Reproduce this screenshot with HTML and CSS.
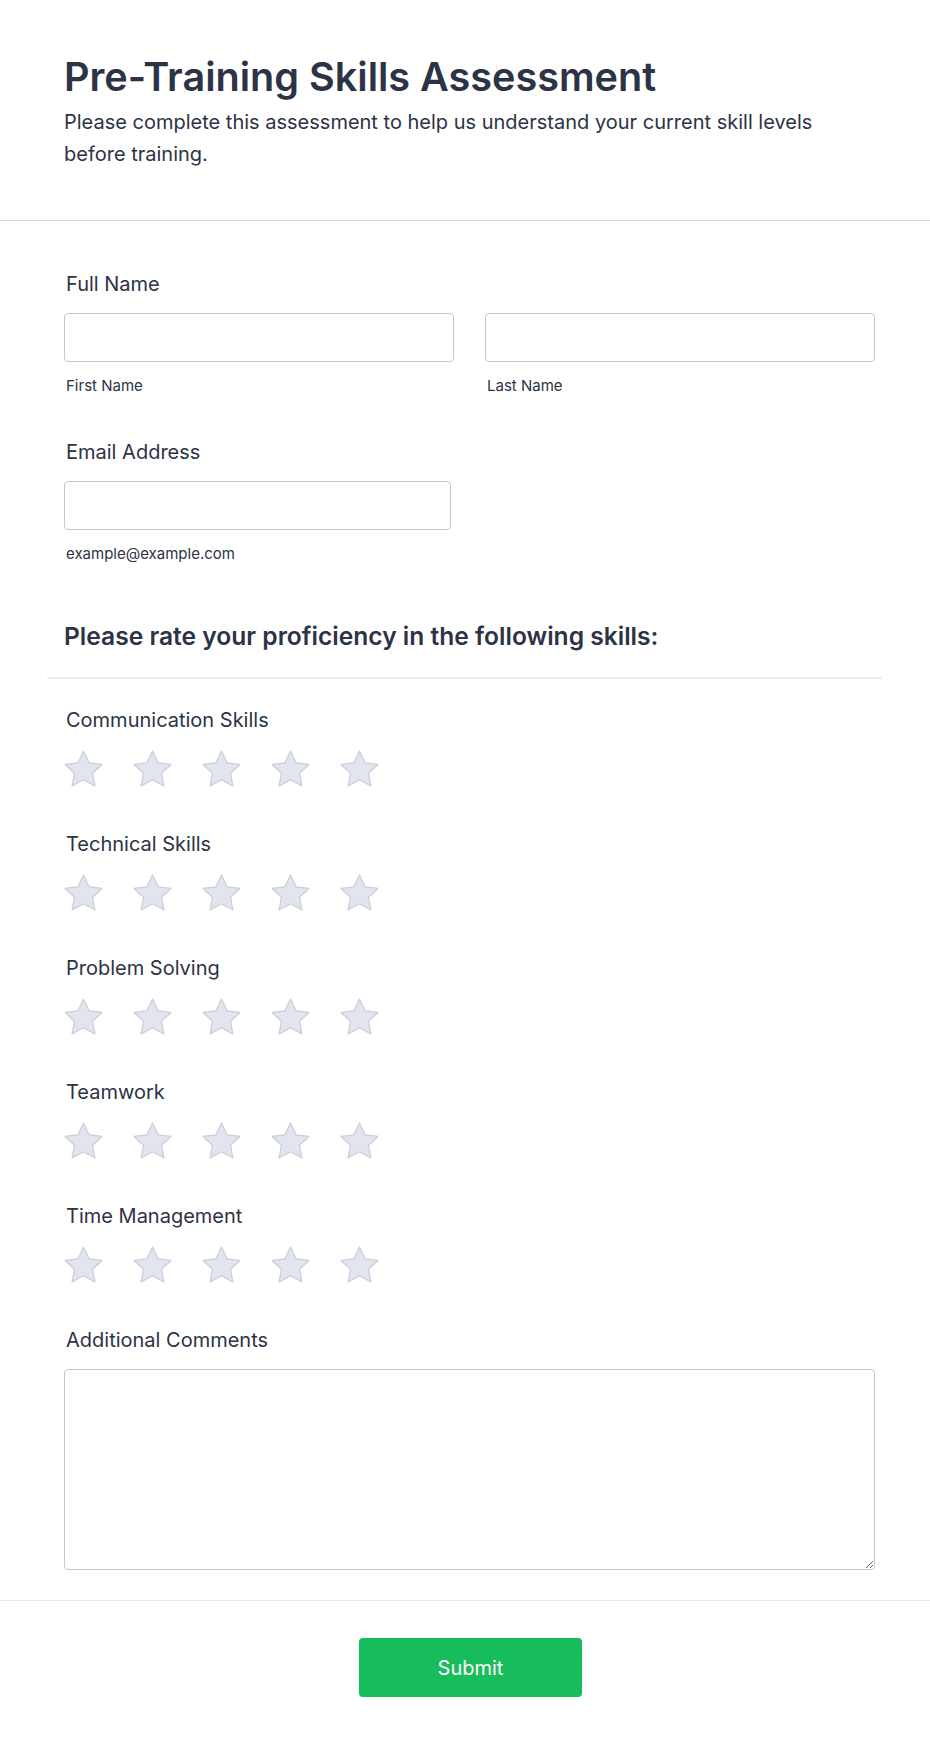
FILE: index.html
```html
<!DOCTYPE html>
<html lang="en">
<head>
<meta charset="utf-8">
<title>Pre-Training Skills Assessment</title>
<link rel="stylesheet" href="styles.css">
</head>
<body>
<header class="form-header">
  <h1 class="form-title">Pre-Training Skills Assessment</h1>
  <p class="form-subtitle">Please complete this assessment to help us understand your current skill levels before training.</p>
</header>

<main class="form-body">
  <div class="field field-name">
    <label class="field-label">Full Name</label>
    <div class="name-row">
      <div class="name-col">
        <input class="text-input" type="text">
        <span class="sub-label">First Name</span>
      </div>
      <div class="name-col">
        <input class="text-input" type="text">
        <span class="sub-label">Last Name</span>
      </div>
    </div>
  </div>

  <div class="field field-email">
    <label class="field-label">Email Address</label>
    <input class="text-input email-input" type="email">
    <span class="sub-label">example@example.com</span>
  </div>

  <div class="section-head">
    <h2 class="section-title">Please rate your proficiency in the following skills:</h2>
  </div>

  <div class="rating">
    <label class="field-label">Communication Skills</label>
    <div class="stars">
      <svg class="star" viewBox="2 2.5 20 19"><polygon points="12 2.5 15 8.9 22 9.8 16.9 14.6 18.2 21.5 12 18.1 5.8 21.5 7.1 14.6 2 9.8 9 8.9"/></svg>
      <svg class="star" viewBox="2 2.5 20 19"><polygon points="12 2.5 15 8.9 22 9.8 16.9 14.6 18.2 21.5 12 18.1 5.8 21.5 7.1 14.6 2 9.8 9 8.9"/></svg>
      <svg class="star" viewBox="2 2.5 20 19"><polygon points="12 2.5 15 8.9 22 9.8 16.9 14.6 18.2 21.5 12 18.1 5.8 21.5 7.1 14.6 2 9.8 9 8.9"/></svg>
      <svg class="star" viewBox="2 2.5 20 19"><polygon points="12 2.5 15 8.9 22 9.8 16.9 14.6 18.2 21.5 12 18.1 5.8 21.5 7.1 14.6 2 9.8 9 8.9"/></svg>
      <svg class="star" viewBox="2 2.5 20 19"><polygon points="12 2.5 15 8.9 22 9.8 16.9 14.6 18.2 21.5 12 18.1 5.8 21.5 7.1 14.6 2 9.8 9 8.9"/></svg>
    </div>
  </div>

  <div class="rating">
    <label class="field-label">Technical Skills</label>
    <div class="stars">
      <svg class="star" viewBox="2 2.5 20 19"><polygon points="12 2.5 15 8.9 22 9.8 16.9 14.6 18.2 21.5 12 18.1 5.8 21.5 7.1 14.6 2 9.8 9 8.9"/></svg>
      <svg class="star" viewBox="2 2.5 20 19"><polygon points="12 2.5 15 8.9 22 9.8 16.9 14.6 18.2 21.5 12 18.1 5.8 21.5 7.1 14.6 2 9.8 9 8.9"/></svg>
      <svg class="star" viewBox="2 2.5 20 19"><polygon points="12 2.5 15 8.9 22 9.8 16.9 14.6 18.2 21.5 12 18.1 5.8 21.5 7.1 14.6 2 9.8 9 8.9"/></svg>
      <svg class="star" viewBox="2 2.5 20 19"><polygon points="12 2.5 15 8.9 22 9.8 16.9 14.6 18.2 21.5 12 18.1 5.8 21.5 7.1 14.6 2 9.8 9 8.9"/></svg>
      <svg class="star" viewBox="2 2.5 20 19"><polygon points="12 2.5 15 8.9 22 9.8 16.9 14.6 18.2 21.5 12 18.1 5.8 21.5 7.1 14.6 2 9.8 9 8.9"/></svg>
    </div>
  </div>

  <div class="rating">
    <label class="field-label">Problem Solving</label>
    <div class="stars">
      <svg class="star" viewBox="2 2.5 20 19"><polygon points="12 2.5 15 8.9 22 9.8 16.9 14.6 18.2 21.5 12 18.1 5.8 21.5 7.1 14.6 2 9.8 9 8.9"/></svg>
      <svg class="star" viewBox="2 2.5 20 19"><polygon points="12 2.5 15 8.9 22 9.8 16.9 14.6 18.2 21.5 12 18.1 5.8 21.5 7.1 14.6 2 9.8 9 8.9"/></svg>
      <svg class="star" viewBox="2 2.5 20 19"><polygon points="12 2.5 15 8.9 22 9.8 16.9 14.6 18.2 21.5 12 18.1 5.8 21.5 7.1 14.6 2 9.8 9 8.9"/></svg>
      <svg class="star" viewBox="2 2.5 20 19"><polygon points="12 2.5 15 8.9 22 9.8 16.9 14.6 18.2 21.5 12 18.1 5.8 21.5 7.1 14.6 2 9.8 9 8.9"/></svg>
      <svg class="star" viewBox="2 2.5 20 19"><polygon points="12 2.5 15 8.9 22 9.8 16.9 14.6 18.2 21.5 12 18.1 5.8 21.5 7.1 14.6 2 9.8 9 8.9"/></svg>
    </div>
  </div>

  <div class="rating">
    <label class="field-label">Teamwork</label>
    <div class="stars">
      <svg class="star" viewBox="2 2.5 20 19"><polygon points="12 2.5 15 8.9 22 9.8 16.9 14.6 18.2 21.5 12 18.1 5.8 21.5 7.1 14.6 2 9.8 9 8.9"/></svg>
      <svg class="star" viewBox="2 2.5 20 19"><polygon points="12 2.5 15 8.9 22 9.8 16.9 14.6 18.2 21.5 12 18.1 5.8 21.5 7.1 14.6 2 9.8 9 8.9"/></svg>
      <svg class="star" viewBox="2 2.5 20 19"><polygon points="12 2.5 15 8.9 22 9.8 16.9 14.6 18.2 21.5 12 18.1 5.8 21.5 7.1 14.6 2 9.8 9 8.9"/></svg>
      <svg class="star" viewBox="2 2.5 20 19"><polygon points="12 2.5 15 8.9 22 9.8 16.9 14.6 18.2 21.5 12 18.1 5.8 21.5 7.1 14.6 2 9.8 9 8.9"/></svg>
      <svg class="star" viewBox="2 2.5 20 19"><polygon points="12 2.5 15 8.9 22 9.8 16.9 14.6 18.2 21.5 12 18.1 5.8 21.5 7.1 14.6 2 9.8 9 8.9"/></svg>
    </div>
  </div>

  <div class="rating">
    <label class="field-label">Time Management</label>
    <div class="stars">
      <svg class="star" viewBox="2 2.5 20 19"><polygon points="12 2.5 15 8.9 22 9.8 16.9 14.6 18.2 21.5 12 18.1 5.8 21.5 7.1 14.6 2 9.8 9 8.9"/></svg>
      <svg class="star" viewBox="2 2.5 20 19"><polygon points="12 2.5 15 8.9 22 9.8 16.9 14.6 18.2 21.5 12 18.1 5.8 21.5 7.1 14.6 2 9.8 9 8.9"/></svg>
      <svg class="star" viewBox="2 2.5 20 19"><polygon points="12 2.5 15 8.9 22 9.8 16.9 14.6 18.2 21.5 12 18.1 5.8 21.5 7.1 14.6 2 9.8 9 8.9"/></svg>
      <svg class="star" viewBox="2 2.5 20 19"><polygon points="12 2.5 15 8.9 22 9.8 16.9 14.6 18.2 21.5 12 18.1 5.8 21.5 7.1 14.6 2 9.8 9 8.9"/></svg>
      <svg class="star" viewBox="2 2.5 20 19"><polygon points="12 2.5 15 8.9 22 9.8 16.9 14.6 18.2 21.5 12 18.1 5.8 21.5 7.1 14.6 2 9.8 9 8.9"/></svg>
    </div>
  </div>

  <div class="field field-comments">
    <label class="field-label">Additional Comments</label>
    <textarea class="text-area"></textarea>
  </div>
</main>

<footer class="form-footer">
  <button class="submit-btn" type="button">Submit</button>
</footer>
</body>
</html>
```

FILE: styles.css
```css
* { box-sizing: border-box; }

html, body {
  margin: 0;
  padding: 0;
  background: #ffffff;
}

body {
  font-family: Inter, "Noto Sans", "Liberation Sans", sans-serif;
  color: #2c3345;
}

.form-header {
  padding: 53px 64px 50px 64px;
  border-bottom: 1px solid #d3d7e3;
}

.form-title {
  margin: 0;
  font-size: 39.6px;
  line-height: 48px;
  font-weight: 600;
  color: #2c3345;
}

.form-subtitle {
  margin: 6px 0 0 0;
  font-size: 20px;
  line-height: 31.5px;
  font-weight: 400;
  color: #2c3345;
}

.form-body {
  padding: 50px 55px 0 64px;
}

.field-label {
  display: block;
  padding-left: 2px;
  font-size: 20px;
  line-height: 27px;
  font-weight: 400;
  color: #2c3345;
}

.text-input {
  display: block;
  width: 100%;
  height: 49px;
  margin-top: 15px;
  border: 1px solid #c3c7d5;
  border-radius: 4px;
  background: #ffffff;
  font: inherit;
}

.name-row {
  display: flex;
  gap: 31px;
}

.name-col {
  flex: 1 1 0;
}

.sub-label {
  display: block;
  margin-top: 14px;
  padding-left: 2px;
  font-size: 15px;
  line-height: 20px;
  color: #2c3345;
}

.field-email {
  margin-top: 43px;
}

.email-input {
  width: 387px;
}

.section-head {
  margin: 56px -7px 0 -17px;
  padding: 0 7px 25px 17px;
  border-bottom: 2px solid #eceef3;
}

.section-title {
  margin: 0;
  font-size: 24.6px;
  line-height: 32px;
  font-weight: 600;
  color: #2c3345;
}

.rating {
  padding-top: 28px;
}

.rating + .rating {
  padding-top: 45px;
}

.stars {
  display: flex;
  gap: 32px;
  margin-top: 17px;
  padding-left: 1px;
}

.star {
  width: 37px;
  height: 35px;
  overflow: visible;
}

.star polygon {
  fill: #e2e5ee;
  stroke: #c9cdd9;
  stroke-width: 0.65;
  stroke-linejoin: round;
}

.field-comments {
  margin-top: 45px;
}

.text-area {
  display: block;
  width: 100%;
  height: 201px;
  margin-top: 15px;
  border: 1px solid #c3c7d5;
  border-radius: 4px;
  background: #ffffff;
  font: inherit;
}

.form-footer {
  margin-top: 30px;
  border-top: 1px solid #e6e8f0;
  padding: 37px 53px 48px 64px;
  display: flex;
  justify-content: center;
}

.submit-btn {
  width: 223px;
  height: 59px;
  border: none;
  border-radius: 4px;
  background: #18bd5b;
  color: #ffffff;
  font-family: Inter, "Noto Sans", "Liberation Sans", sans-serif;
  font-size: 20px;
  font-weight: 400;
}
```
